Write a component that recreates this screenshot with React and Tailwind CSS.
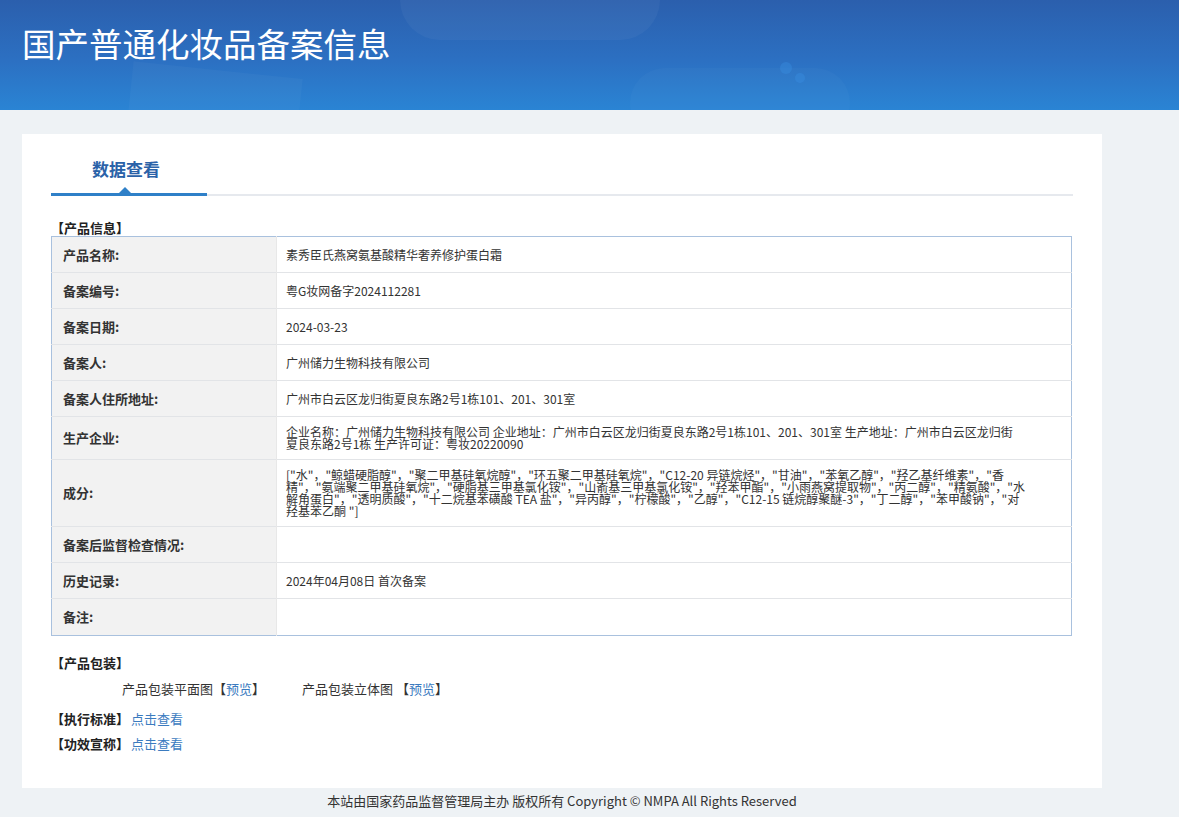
import React from "react";

const ingredients = [
  "[\"水\"，\"鲸蜡硬脂醇\"，\"聚二甲基硅氧烷醇\"，\"环五聚二甲基硅氧烷\"，\"C12-20 异链烷烃\"，\"甘油\"，\"苯氧乙醇\"，\"羟乙基纤维素\"，\"香",
  "精\"，\"氨端聚二甲基硅氧烷\"，\"硬脂基三甲基氯化铵\"，\"山嵛基三甲基氯化铵\"，\"羟苯甲酯\"，\"小雨燕窝提取物\"，\"丙二醇\"，\"精氨酸\"，\"水",
  "解角蛋白\"，\"透明质酸\"，\"十二烷基苯磺酸 TEA 盐\"，\"异丙醇\"，\"柠檬酸\"，\"乙醇\"，\"C12-15 链烷醇聚醚-3\"，\"丁二醇\"，\"苯甲酸钠\"，\"对",
  "羟基苯乙酮 \"]",
];

const producer = [
  "企业名称：广州储力生物科技有限公司 企业地址：广州市白云区龙归街夏良东路2号1栋101、201、301室 生产地址：广州市白云区龙归街",
  "夏良东路2号1栋 生产许可证：粤妆20220090",
];

const rows = [
  ["产品名称:", ["素秀臣氏燕窝氨基酸精华奢养修护蛋白霜"], "h-[36px]"],
  ["备案编号:", ["粤G妆网备字2024112281"], "h-[36px]"],
  ["备案日期:", ["2024-03-23"], "h-[36px]"],
  ["备案人:", ["广州储力生物科技有限公司"], "h-[36px]"],
  ["备案人住所地址:", ["广州市白云区龙归街夏良东路2号1栋101、201、301室"], "h-[36px]"],
  ["生产企业:", producer, "h-[43px]"],
  ["成分:", ingredients, "h-[67px]"],
  ["备案后监督检查情况:", [], "h-[36px]"],
  ["历史记录:", ["2024年04月08日 首次备案"], "h-[36px]"],
  ["备注:", [], "h-[37px]"],
];

const font = { fontFamily: '"Microsoft YaHei", "Noto Sans CJK SC", "Noto Sans", sans-serif' };

export default function App() {
  return (
    <div className="min-h-[817px] w-[1179px] bg-[#eef2f5] text-[#333]" style={font}>
      {/* Header */}
      <div className="relative h-[110px] overflow-hidden bg-[linear-gradient(180deg,#2b5fad_0%,#2c70c2_55%,#2a84d4_100%)]">
        <div className="absolute left-[400px] top-[-40px] h-[80px] w-[260px] rounded-full bg-white/[0.04]"></div>
        <div className="absolute left-[130px] top-[70px] h-[60px] w-[170px] rotate-[6deg] bg-white/[0.03]"></div>
        <div className="absolute left-[630px] top-[68px] h-[70px] w-[220px] rounded-full bg-white/[0.025]"></div>
        <div className="absolute left-[780px] top-[62px] h-[12px] w-[12px] rounded-full bg-[#3a8fe0]/40"></div>
        <div className="absolute left-[795px] top-[73px] h-[10px] w-[10px] rounded-full bg-[#3a8fe0]/40"></div>
        <h1 className="relative pl-[22px] pt-[22px] text-[33.5px] leading-[42px] font-normal text-white">
          国产普通化妆品备案信息
        </h1>
      </div>

      {/* Card */}
      <div className="ml-[22px] mt-[24px] w-[1080px] bg-white px-[29px] pb-[36px]">
        {/* Tabs */}
        <div className="relative flex h-[62px] items-end border-b-2 border-[#e6e9ee]">
          <div className="relative mb-[-2px] w-[156px] border-b-[3px] border-[#2f80c8] pb-[12px] pl-[41px] text-[17px] font-bold leading-[24px] text-[#2a62a8]">
            数据查看
            <span className="absolute bottom-0 left-[68px] h-0 w-0 border-x-[6px] border-b-[6px] border-x-transparent border-b-[#2f80c8]"></span>
          </div>
        </div>

        {/* Product info */}
        <div className="mt-[23px] text-[13px] font-bold leading-[17px] text-[#222]">【产品信息】</div>
        <table className="w-[1021px] border-collapse border border-[#a9c1de] text-left">
          <tbody>
            {rows.map(([label, lines, h], i) => (
              <tr key={i} className={`${h} border-b border-[#e2e4e7] last:border-b-0`}>
                <td className="w-[225px] bg-[#f2f2f2] pl-[11px] align-middle text-[13px] font-bold text-[#333]">
                  {label}
                </td>
                <td className="border-l border-[#e8e8e8] pl-[9px] align-middle text-[12px] leading-[12px] text-[#333]">
                  {lines.map((l, j) => (
                    <div key={j} className="whitespace-nowrap">
                      {l}
                    </div>
                  ))}
                </td>
              </tr>
            ))}
          </tbody>
        </table>

        {/* Packaging */}
        <div className="mt-[18px] text-[13px] font-bold leading-[17px] text-[#222]">【产品包装】</div>
        <div className="mt-[9px] flex text-[13px] leading-[17px] text-[#333]">
          <div className="ml-[71px] w-[180px]">
            产品包装平面图【<span className="text-[#3b7bbf]">预览</span>】
          </div>
          <div>
            产品包装立体图 【<span className="text-[#3b7bbf]">预览</span>】
          </div>
        </div>
        <div className="mt-[13px] flex text-[13px] leading-[17px]">
          <span className="font-bold text-[#222]">【执行标准】</span>
          <span className="ml-[2px] text-[#3b7bbf]">点击查看</span>
        </div>
        <div className="mt-[8px] flex text-[13px] leading-[17px]">
          <span className="font-bold text-[#222]">【功效宣称】</span>
          <span className="ml-[2px] text-[#3b7bbf]">点击查看</span>
        </div>
      </div>

      {/* Footer */}
      <div className="ml-[22px] w-[1080px] py-[4px] text-center text-[13px] leading-[18px] text-[#333]">
        本站由国家药品监督管理局主办 版权所有 Copyright © NMPA All Rights Reserved
      </div>
    </div>
  );
}
